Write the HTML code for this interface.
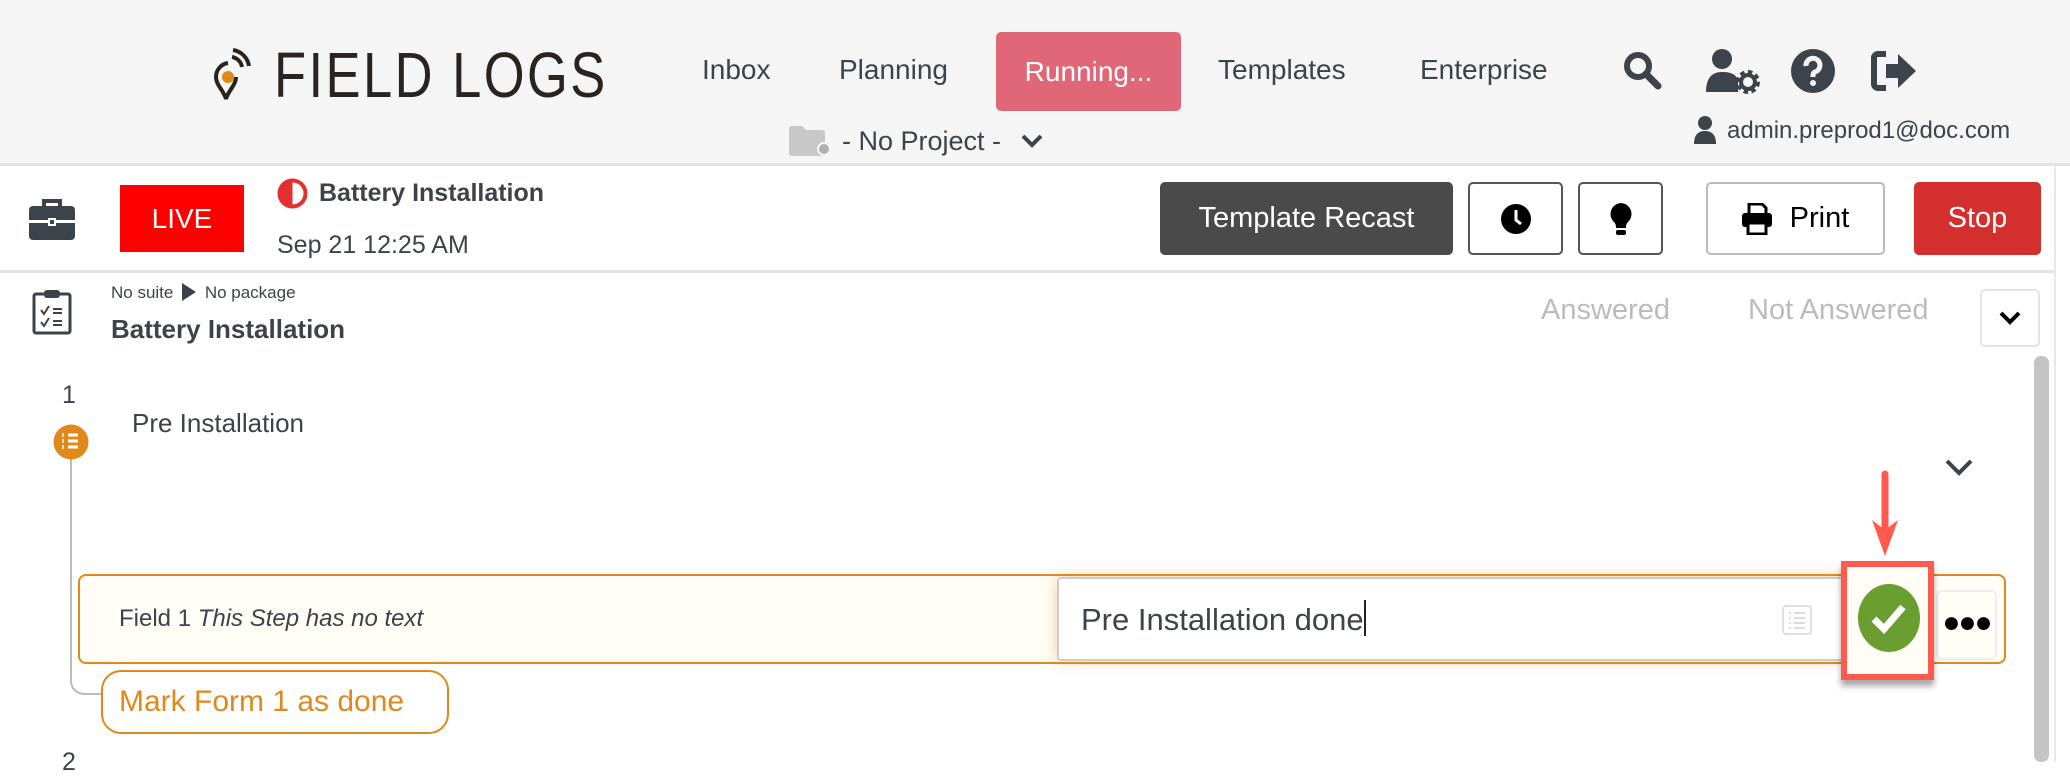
<!DOCTYPE html>
<html><head><meta charset="utf-8"><style>
*{box-sizing:border-box;margin:0;padding:0}
body{width:2070px;height:762px;overflow:hidden;background:#fff;font-family:"Liberation Sans",sans-serif;color:#3d434a;position:relative}
.a{position:absolute;white-space:nowrap}
.hdr{position:absolute;left:0;top:0;width:2070px;height:166px;background:#f5f5f5;border-bottom:3px solid #e4e4e4}
.nav{font-size:28px;color:#3d434a;top:54px}
.btn{position:absolute;border-radius:5px;display:flex;align-items:center;justify-content:center}
</style></head><body>
<div class="hdr"></div>
<svg class="a" style="left:211px;top:47px" width="42" height="54" viewBox="0 0 42 54">
<path d="M17 16a14 14 0 0 0-12 14c0 8 8 14 10 22 2-8 10-14 10-22" fill="none" stroke="#2a2420" stroke-width="4"/>
<circle cx="17" cy="30" r="6" fill="#e0891a"/>
<path d="M21 10a12 12 0 0 1 10 10M22 3a19 19 0 0 1 16 16" fill="none" stroke="#2a2420" stroke-width="4"/>
</svg>
<div class="a" style="left:274px;top:45px;font-size:64px;font-weight:300;color:#2a2420;letter-spacing:3px;line-height:60px;transform:scaleX(.82);transform-origin:left">FIELD LOGS</div>
<div class="a nav" style="left:702px">Inbox</div>
<div class="a nav" style="left:839px">Planning</div>
<div class="btn" style="left:996px;top:32px;width:185px;height:79px;background:#e06777;color:#fff;font-size:28px">Running...</div>
<div class="a nav" style="left:1218px">Templates</div>
<div class="a nav" style="left:1420px">Enterprise</div>
<svg class="a" style="left:1622px;top:50px" width="42" height="40" viewBox="0 0 42 40"><circle cx="16" cy="16" r="11" fill="none" stroke="#3d434a" stroke-width="6"/><path d="M24 24l12 12" stroke="#3d434a" stroke-width="7" stroke-linecap="round"/></svg>
<svg class="a" style="left:1704px;top:48px" width="60" height="46" viewBox="0 0 60 46"><circle cx="18" cy="11" r="10" fill="#3d434a"/><path d="M2 44c0-14 6-20 16-20s14 3 16 8v12z" fill="#3d434a"/><circle cx="44" cy="34" r="9" fill="none" stroke="#3d434a" stroke-width="6" stroke-dasharray="4 3"/><circle cx="44" cy="34" r="7" fill="none" stroke="#3d434a" stroke-width="4"/></svg>
<svg class="a" style="left:1790px;top:48px" width="46" height="46" viewBox="0 0 46 46"><circle cx="23" cy="23" r="22" fill="#3d434a"/><path d="M16 18a7 7 0 1 1 9 6c-2 1-2 2-2 5" fill="none" stroke="#f5f5f5" stroke-width="5"/><circle cx="23" cy="35" r="3" fill="#f5f5f5"/></svg>
<svg class="a" style="left:1870px;top:50px" width="48" height="42" viewBox="0 0 48 42"><path d="M16 4H8a4 4 0 0 0-4 4v26a4 4 0 0 0 4 4h8" fill="none" stroke="#3d434a" stroke-width="6"/><path d="M16 14h12V4l18 17-18 17V28H16z" fill="#3d434a"/></svg>
<svg class="a" style="left:789px;top:126px" width="44" height="30" viewBox="0 0 44 30"><path d="M0 3a3 3 0 0 1 3-3h10l4 4h16a3 3 0 0 1 3 3v20a3 3 0 0 1-3 3H3a3 3 0 0 1-3-3z" fill="#c8c8c8"/><circle cx="35" cy="23" r="6" fill="#b0b0b0" stroke="#f5f5f5" stroke-width="2"/></svg>
<div class="a" style="left:842px;top:126px;font-size:27px;color:#3d434a">- No Project -</div>
<svg class="a" style="left:1020px;top:133px" width="24" height="16" viewBox="0 0 24 16"><path d="M3 3l9 9 9-9" fill="none" stroke="#3d434a" stroke-width="4"/></svg>
<svg class="a" style="left:1694px;top:116px" width="22" height="28" viewBox="0 0 22 28"><circle cx="11" cy="7" r="7" fill="#3d434a"/><path d="M0 28c0-9 4-13 11-13s11 4 11 13z" fill="#3d434a"/></svg>
<div class="a" style="left:1727px;top:117px;font-size:24px;color:#3d434a">admin.preprod1@doc.com</div>
<svg class="a" style="left:29px;top:198px" width="46" height="42" viewBox="0 0 46 42"><path d="M15 8V3h16v5" fill="none" stroke="#3d434a" stroke-width="4"/><rect x="0" y="8" width="46" height="34" rx="4" fill="#3d434a"/><rect x="0" y="22" width="46" height="3" fill="#fff"/><rect x="19" y="20" width="8" height="8" fill="#fff"/><rect x="21" y="22" width="4" height="4" fill="#3d434a"/></svg>
<div class="btn" style="left:120px;top:185px;width:124px;height:67px;background:#ff0000;color:#fff;font-size:28px;border-radius:0">LIVE</div>
<svg class="a" style="left:277px;top:178px" width="31" height="31" viewBox="0 0 31 31"><circle cx="15.5" cy="15.5" r="13" fill="#fff" stroke="#e53030" stroke-width="4"/><path d="M15.5 2.5a13 13 0 0 0 0 26z" fill="#e53030"/></svg>
<div class="a" style="left:319px;top:179px;font-size:25px;font-weight:bold;color:#3d434a">Battery Installation</div>
<div class="a" style="left:277px;top:231px;font-size:25px;color:#3d434a">Sep 21 12:25 AM</div>
<div class="btn" style="left:1160px;top:182px;width:293px;height:73px;background:#4a4a4a;color:#fff;font-size:29px">Template Recast</div>
<div class="btn" style="left:1468px;top:182px;width:95px;height:73px;border:2px solid #555;background:#fff"><svg width="32" height="32" viewBox="0 0 32 32"><circle cx="16" cy="16" r="15" fill="#000"/><path d="M16 7v10l5 4" stroke="#fff" stroke-width="3" fill="none"/></svg></div>
<div class="btn" style="left:1578px;top:182px;width:85px;height:73px;border:2px solid #555;background:#fff"><svg width="24" height="34" viewBox="0 0 24 34"><path d="M12 1a11 11 0 0 0-7 19c2 2 2 4 2 6h10c0-2 0-4 2-6A11 11 0 0 0 12 1z" fill="#000"/><rect x="7" y="28" width="10" height="5" rx="2" fill="#000"/></svg></div>
<div class="btn" style="left:1706px;top:182px;width:179px;height:73px;border:2px solid #bbb;background:#fff;font-size:29px;color:#000"><svg width="30" height="32" viewBox="0 0 30 32" style="margin-right:18px"><path d="M7 10V1h13l4 4v5" fill="none" stroke="#000" stroke-width="3"/><rect x="0" y="10" width="30" height="14" rx="3" fill="#000"/><rect x="6" y="20" width="18" height="11" fill="#fff" stroke="#000" stroke-width="3"/></svg>Print</div>
<div class="btn" style="left:1914px;top:182px;width:127px;height:73px;background:#d32f2f;color:#fff;font-size:29px">Stop</div>
<div class="a" style="left:0;top:270px;width:2054px;height:3px;background:#e4e4e4"></div>
<div class="a" style="left:2054px;top:166px;width:2px;height:596px;background:#e8e8e8"></div>
<svg class="a" style="left:32px;top:289px" width="40" height="46" viewBox="0 0 40 46"><rect x="2" y="5" width="36" height="39" rx="2" fill="none" stroke="#3d434a" stroke-width="3"/><rect x="12" y="1" width="16" height="8" rx="3" fill="#3d434a"/><path d="M9 21l3 4 5-8M9 33l3 4 5-8" fill="none" stroke="#3d434a" stroke-width="2"/><path d="M21 20h9M21 24h9M21 32h9M21 36h9" stroke="#3d434a" stroke-width="2"/></svg>
<div class="a" style="left:111px;top:283px;font-size:17px;color:#3d434a">No suite <span style="display:inline-block;width:0;height:0;border-left:14px solid #3d434a;border-top:9px solid transparent;border-bottom:9px solid transparent;vertical-align:-3px;margin:0 4px"></span> No package</div>
<div class="a" style="left:111px;top:314px;font-size:26px;font-weight:bold;color:#3d434a">Battery Installation</div>
<div class="a" style="left:1541px;top:294px;font-size:29px;color:#bbb">Answered</div>
<div class="a" style="left:1748px;top:294px;font-size:29px;color:#bbb">Not Answered</div>
<div class="btn" style="left:1980px;top:289px;width:60px;height:58px;border:2px solid #e4e4e4;background:#fff"><svg width="24" height="16" viewBox="0 0 24 16"><path d="M3 3l9 9 9-9" fill="none" stroke="#000" stroke-width="4"/></svg></div>
<div class="a" style="left:2034px;top:356px;width:15px;height:406px;background:#c4c4c4;border-radius:7px"></div>
<div class="a" style="left:62px;top:381px;font-size:25px;color:#3d434a">1</div>
<div class="a" style="left:70px;top:455px;width:2px;height:220px;background:#bbb"></div>
<div class="a" style="left:70px;top:660px;width:34px;height:35px;border-left:2px solid #bbb;border-bottom:2px solid #bbb;border-bottom-left-radius:14px"></div>
<svg class="a" style="left:53px;top:424px" width="36" height="36" viewBox="0 0 36 36"><circle cx="18" cy="18" r="17.5" fill="#e0891a"/><path d="M15 11h10M15 17h10M15 23h10" stroke="#fff" stroke-width="3"/><path d="M10 9v4M10 15v4M10 21v4" stroke="#fff" stroke-width="1.5"/></svg>
<div class="a" style="left:132px;top:408px;font-size:26px;color:#3d434a">Pre Installation</div>
<svg class="a" style="left:1944px;top:458px" width="30" height="18" viewBox="0 0 30 18"><path d="M3 3l12 12 12-12" fill="none" stroke="#3d434a" stroke-width="4"/></svg>
<div class="a" style="left:78px;top:574px;width:1928px;height:90px;border:2px solid #e0891a;background:#fffdf5;border-radius:8px"></div>
<div class="a" style="left:119px;top:605px;font-size:24px;color:#3d434a">Field 1 <i>This Step has no text</i></div>
<div class="a" style="left:1057px;top:577px;width:787px;height:84px;background:#fff;border:2px solid #ccc;border-radius:4px;box-shadow:0 0 14px rgba(240,140,60,.45)"></div>
<div class="a" style="left:1081px;top:600px;font-size:31px;color:#3d434a">Pre Installation done<span style="display:inline-block;width:2px;height:36px;background:#222;vertical-align:-6px"></span></div>
<svg class="a" style="left:1782px;top:605px" width="30" height="30" viewBox="0 0 30 30"><rect x="1" y="1" width="28" height="28" rx="3" fill="none" stroke="#e0e0e0" stroke-width="2"/><path d="M7 8h2M12 8h11M7 13h2M12 13h11M7 18h2M12 18h11M7 23h2M12 23h11" stroke="#ddd" stroke-width="2"/></svg>
<div class="a" style="left:1936px;top:590px;width:61px;height:70px;border:2px solid #eee;border-radius:6px;background:#fffdf5;font-size:30px;color:#000;text-align:center;line-height:62px;font-weight:bold;letter-spacing:-2px">●●●</div>
<div class="a" style="left:1841px;top:561px;width:93px;height:119px;border:6px solid #ff5a4d;background:#fffdf5;box-shadow:0 6px 6px rgba(0,0,0,.35)"></div>
<svg class="a" style="left:1857px;top:583px" width="64" height="70" viewBox="0 0 64 70"><ellipse cx="32" cy="35" rx="31" ry="34" fill="#6a9e30"/><path d="M17 36l10 10 19-22" fill="none" stroke="#fff" stroke-width="7"/></svg>
<svg class="a" style="left:1870px;top:470px" width="30" height="90" viewBox="0 0 30 90"><path d="M15 4v60" stroke="#ff5a4d" stroke-width="7" stroke-linecap="round"/><path d="M2 50l13 36 13-36-13 10z" fill="#ff5a4d"/></svg>
<div class="a" style="left:101px;top:670px;width:348px;height:64px;border:2px solid #e0891a;border-radius:20px;background:#fff;color:#e0891a;font-size:30px;line-height:60px;padding-left:16px">Mark Form 1 as done</div>
<div class="a" style="left:62px;top:748px;font-size:25px;color:#3d434a">2</div>
</body></html>
